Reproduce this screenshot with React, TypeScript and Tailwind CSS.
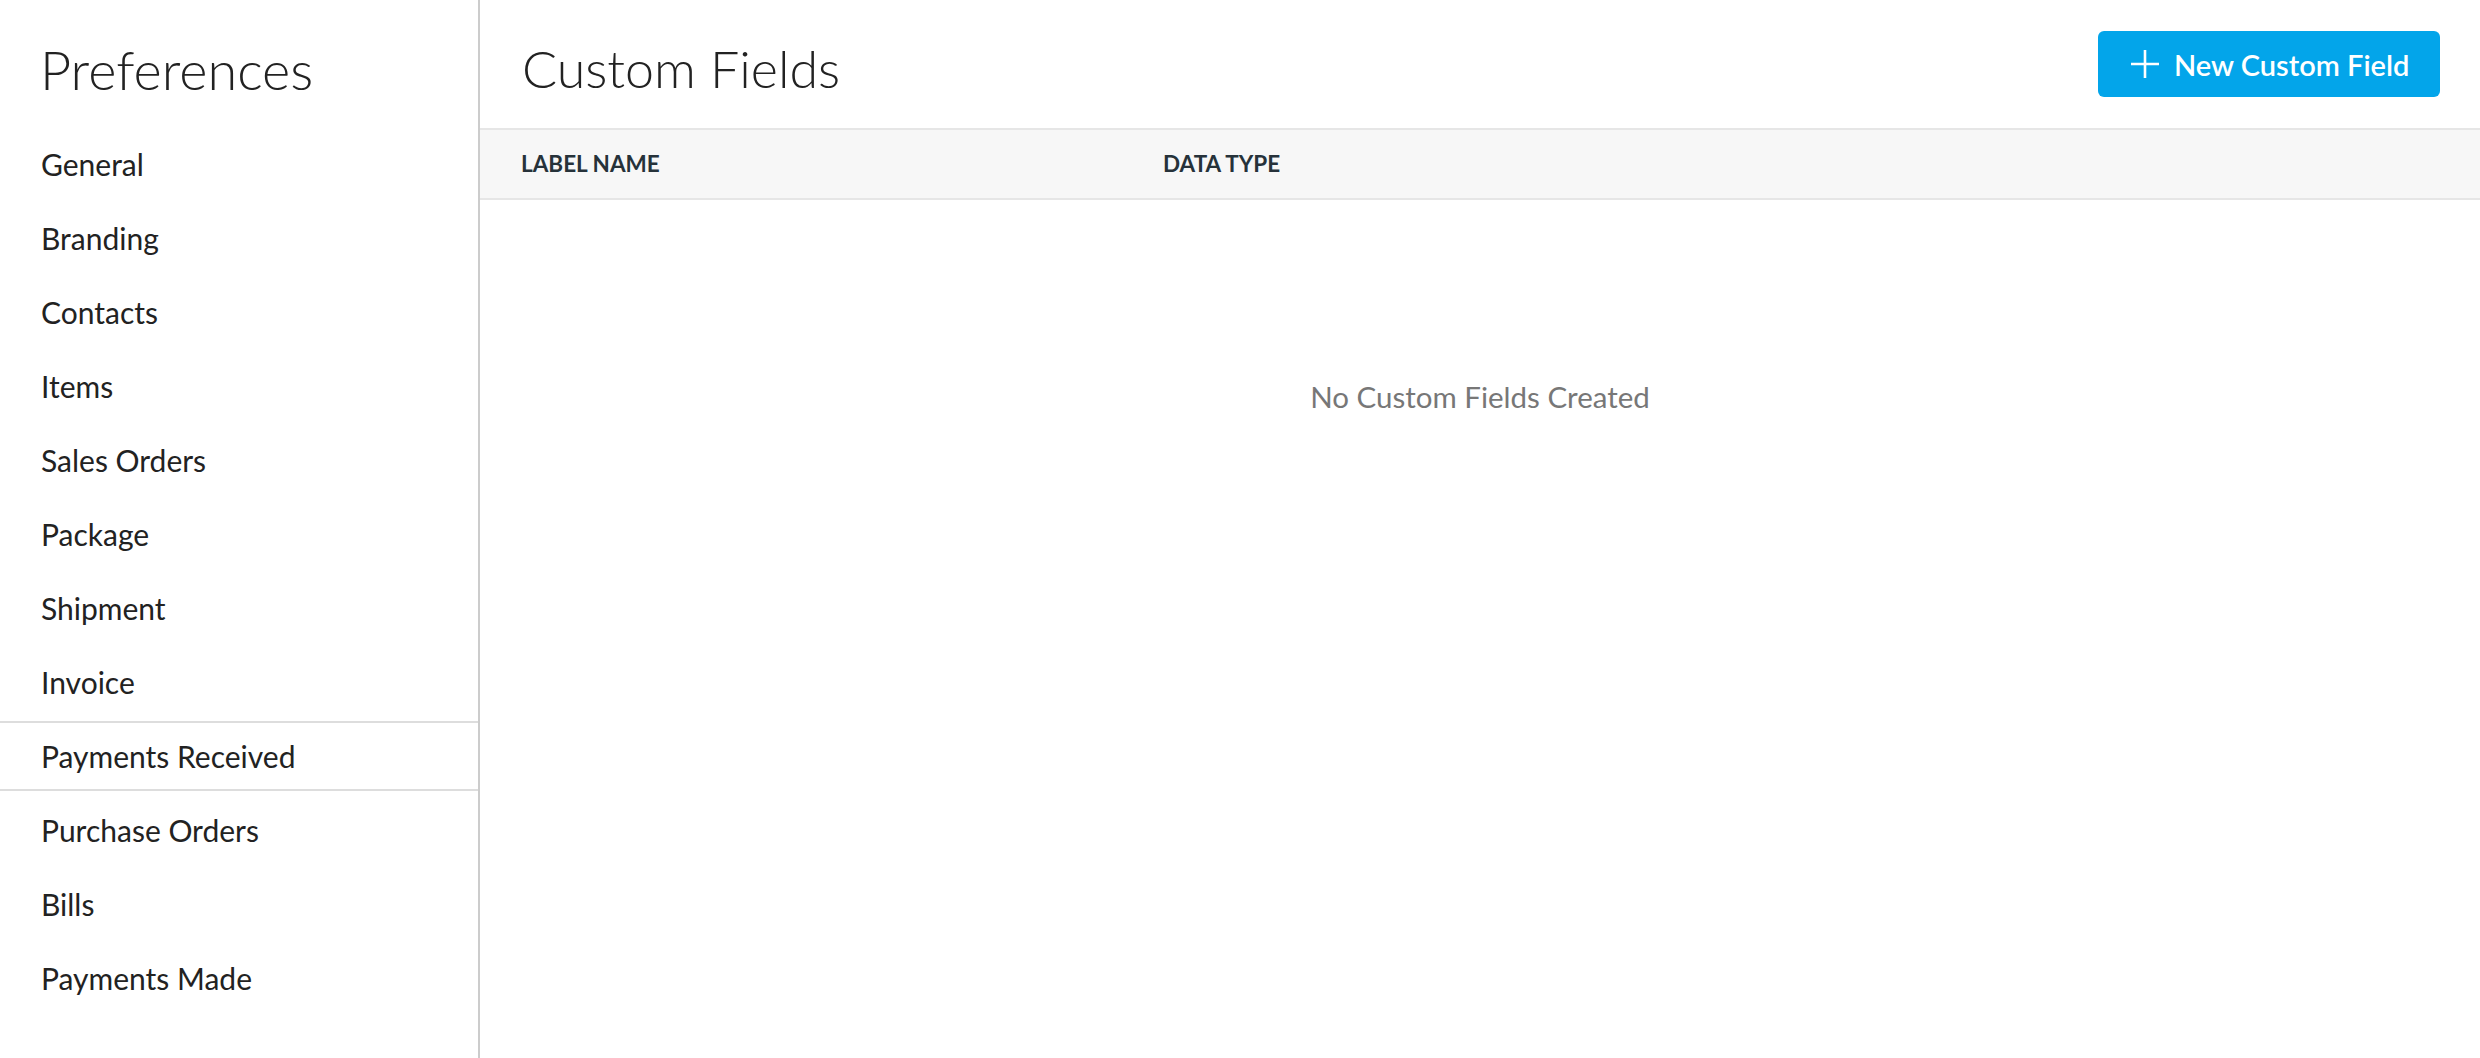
import React from "react";

const items = [
  "General",
  "Branding",
  "Contacts",
  "Items",
  "Sales Orders",
  "Package",
  "Shipment",
  "Invoice",
  "Payments Received",
  "Purchase Orders",
  "Bills",
  "Payments Made",
];

export default function App() {
  return (
    <div
      className="flex h-[1058px] w-[2480px] overflow-hidden bg-white"
      style={{ fontFamily: "Lato, 'Noto Sans', sans-serif" }}
    >
      <aside className="flex h-full w-[480px] shrink-0 flex-col border-r-2 border-[#cccccc]">
        <div className="flex h-[127px] items-center pl-[40px] pt-[12px]">
          <h1 className="text-[54px] font-light leading-none text-[#222222]">Preferences</h1>
        </div>
        <nav className="flex flex-col">
          {items.map((it) =>
            it === "Payments Received" ? (
              <div key={it} className="flex h-[74px] flex-col justify-center">
                <div className="flex h-[70px] items-center border-y-2 border-[#dddddd] pl-[41px] text-[30px] text-[#222222]">
                  {it}
                </div>
              </div>
            ) : (
              <div key={it} className="flex h-[74px] items-center pl-[41px] text-[30px] text-[#222222]">
                {it}
              </div>
            )
          )}
        </nav>
      </aside>
      <main className="flex min-w-0 flex-1 flex-col">
        <header className="flex h-[128px] items-center justify-between pl-[42px] pr-[40px]">
          <h2 className="pt-[8px] text-[52px] font-light leading-none text-[#222222]">Custom Fields</h2>
          <button className="flex h-[66px] w-[342px] items-center gap-[14px] rounded-[6px] bg-[#03a5ea] pl-[32px] text-[29px] font-semibold text-white">
            <svg width="30" height="30" viewBox="0 0 30 30" fill="none" stroke="white" strokeWidth="2.6">
              <path d="M15 1v28M1 15h28" />
            </svg>
            <span className="leading-none">New Custom Field</span>
          </button>
        </header>
        <div className="flex h-[72px] items-center border-y-2 border-[#e6e6e6] bg-[#f7f7f7] text-[22.5px] font-bold text-[#26323a]">
          <div className="w-[683px] pl-[41px]">LABEL NAME</div>
          <div>DATA TYPE</div>
        </div>
        <div className="flex justify-center pt-[175px] text-[29.5px] text-[#777777]">
          No Custom Fields Created
        </div>
      </main>
    </div>
  );
}
